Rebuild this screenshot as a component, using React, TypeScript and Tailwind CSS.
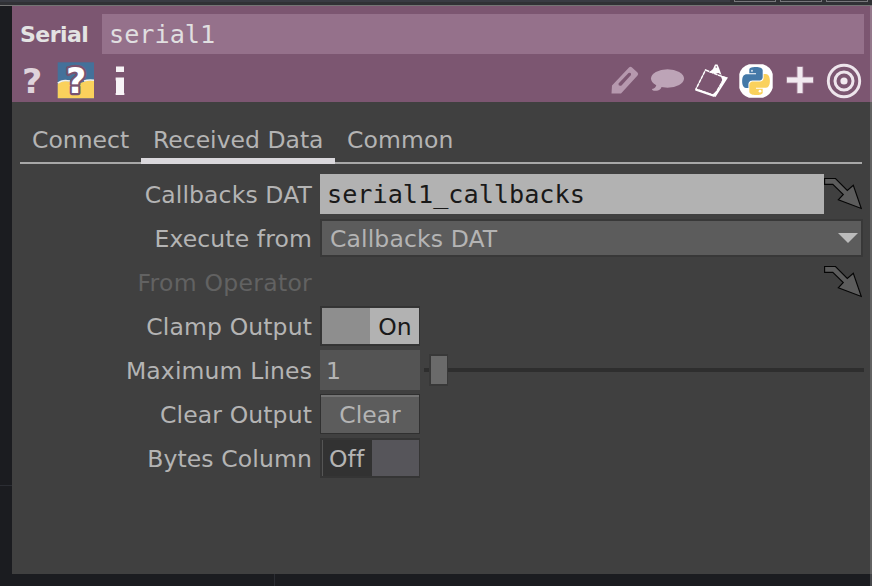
import React from "react";

const SANS = "font-['DejaVu_Sans',sans-serif]";
const MONO = "font-['DejaVu_Sans_Mono',monospace]";

function Row({ label, dim, children }: { label: string; dim?: boolean; children?: React.ReactNode }) {
  return (
    <div className="flex h-[44px] items-start">
      <div className={`w-[300px] shrink-0 text-right leading-[43px] ${dim ? "tracking-[0.28px] text-[#626262]" : "tracking-[0.12px] text-[#b4b4b4]"}`}>
        {label}
      </div>
      <div className="ml-2 flex h-10 flex-1 items-center">{children}</div>
    </div>
  );
}

function PickArrow() {
  return (
    <svg className="block h-10 w-[38px] shrink-0" viewBox="0 0 38 40" fill="#5c5c5c" stroke="#050505" strokeWidth="1.1">
      <path d="M.6 4.500H11.500L23.300 16.500L29.300 11.300L37.300 34.500L14.300 25.800L19.300 20.500L8.800 10.400H.6Z" />
    </svg>
  );
}

function PythonLogo() {
  return (
    <svg className="block size-[34px]" viewBox="0 0 34 34">
      <path d="M10 .3H24Q31.500 2.500 33.700 10V24Q31.500 31.500 24 33.700H10Q2.500 31.500 .3 24V10Q2.500 2.500 10 .3Z" fill="#fff" />
      <g transform="translate(3.200 3) scale(1.150 1.170)">
        <path
          fill="#4479a8"
          d="M14.25.18l.9.2.73.26.59.3.45.32.34.34.25.34.16.33.1.3.04.26.02.2-.01.13V8.5l-.05.63-.13.55-.21.46-.26.38-.3.31-.33.25-.35.19-.35.14-.33.1-.3.07-.26.04-.21.02H8.77l-.69.05-.59.14-.5.22-.41.27-.33.32-.27.35-.2.36-.15.37-.1.35-.07.32-.04.27-.02.21v3.06H3.17l-.21-.03-.28-.07-.32-.12-.35-.18-.36-.26-.36-.36-.35-.46-.32-.59-.28-.73-.21-.88-.14-1.05-.05-1.23.06-1.22.16-1.04.24-.87.32-.71.36-.57.4-.44.42-.33.42-.24.4-.16.36-.1.32-.05.24-.01h.16l.06.01h8.16v-.83H6.18l-.01-2.75-.02-.37.05-.34.11-.31.17-.28.25-.26.31-.23.38-.2.44-.18.51-.15.58-.12.64-.1.71-.06.77-.04.84-.02 1.27.05z"
        />
        <path
          fill="#fad15c"
          d="M21.04 6.11l.28.06.32.12.35.18.36.27.36.35.35.47.32.59.28.73.21.88.14 1.04.05 1.23-.06 1.23-.16 1.04-.24.86-.32.71-.36.57-.4.45-.42.33-.42.24-.4.16-.36.09-.32.05-.24.02-.16-.01h-8.22v.82h5.84l.01 2.76.02.36-.05.34-.11.31-.17.29-.25.25-.31.24-.38.2-.44.17-.51.15-.58.13-.64.09-.71.07-.77.04-.84.01-1.27-.04-1.07-.14-.9-.2-.73-.25-.59-.3-.45-.33-.34-.34-.25-.34-.16-.33-.1-.3-.04-.25-.02-.2.01-.13v-5.34l.05-.64.13-.54.21-.46.26-.38.3-.32.33-.24.35-.2.35-.14.33-.1.3-.06.26-.04.21-.02.13-.01h5.84l.69-.05.59-.14.5-.21.41-.28.33-.32.27-.35.2-.36.15-.36.1-.35.07-.32.04-.28.02-.21V6.07h2.09l.14.01z"
        />
        <circle cx="8.500" cy="3.300" r=".9" fill="#c9d9e6" />
        <circle cx="15.500" cy="20.700" r="1.200" fill="#fff" />
      </g>
    </svg>
  );
}

function HeaderIcons() {
  return (
    <div className="flex h-10 items-center pr-2 pl-2">
      <div className="w-[37px] pl-0.5 text-[34px] leading-[40px] font-bold text-[#dfd3db]">
        <span className="inline-block origin-left scale-x-[1.03]">?</span>
      </div>
      <svg className="mb-[2px] block h-[37px] w-[37px] shrink-0 overflow-visible" viewBox="0 0 37 37">
        <rect x=".7" y=".3" width="36.300" height="36" fill="#44719a" />
        <path d="M.7 22C5 18 11 18.500 17 21S28 17 37 18.500V36.300H.7Z" fill="#fad15c" />
        <path d="M.7 21.200C4.500 17.800 9 18 13 19M27 19Q31 17.500 37 18.200" fill="none" stroke="#f3f1ec" strokeWidth="1.500" />
        <text x="9" y="31" fontSize="35" fontWeight="700" fontFamily="DejaVu Sans, sans-serif" fill="#fff" stroke="#785370" strokeWidth="4.500" strokeLinejoin="round" paintOrder="stroke">?</text>
      </svg>
      <svg className="ml-5 block h-[30px] w-3 shrink-0" viewBox="0 0 12 30">
        <path d="M2 .5h8v5.500H2ZM2 11.500h8V29H2Z" fill="#f7f3f6" />
        <path d="M1 11.500h1v3H1ZM1 27h1v2H1ZM10 27h1v2h-1Z" fill="#a98ca1" />
      </svg>
      <div className="flex-1" />
      <svg className="block h-9 w-8 shrink-0" viewBox="0 0 32 36">
        <path d="M3 22.500L20 4.500Q21.500 3 23 4.500L28.500 9.500Q30 11 28.500 12.500L12 30.500H2.500Z" fill="#b698ae" />
        <path d="M9.500 20.500L19.500 10Q22.500 9 22 12L12.500 22.500Q9 23.500 9.500 20.500Z" fill="#7c5671" />
      </svg>
      <svg className="ml-[9px] block h-9 w-9 shrink-0" viewBox="0 0 36 36" fill="#bda4b7">
        <ellipse cx="17.500" cy="15.500" rx="16.500" ry="9.200" />
        <path d="M6.500 21Q6 25.500 2 26Q2 28.500 8 27.500Q11.500 26 11.500 23.500Z" />
      </svg>
      <svg className="ml-[7px] block h-9 w-9 shrink-0" viewBox="0 0 36 36">
        <path d="M12.500 7L31.500 14.500L21.500 32.500L3 26Z" fill="none" stroke="#fff" strokeWidth="1.500" strokeDasharray="4 .5" />
        <path d="M16 9.500L20 6L22 1.500H24.500L26 5L28.500 12L25.500 10L21 10.500ZM27.500 12.500L35 14.500L22.500 34L19.500 31.500L26 25.500L29.500 17.500Z" fill="#fff" />
        <circle cx="23.300" cy="4" r=".8" fill="#7c5671" />
        <path d="M2.500 26.500L21.500 33" stroke="#fff" strokeWidth="2" />
      </svg>
      <div className="ml-2.5"><PythonLogo /></div>
      <svg className="mr-3 mb-0.5 ml-[13px] block h-7 w-7 shrink-0" viewBox="0 0 28 28">
        <path d="M14 .5V27.500M.5 14H27.500" stroke="#b295aa" strokeWidth="6.500" />
        <path d="M14 1V27M1 14H27" stroke="#f1eaf0" strokeWidth="4.800" />
      </svg>
      <svg className="block h-9 w-9 shrink-0" viewBox="0 0 36 36" fill="none" stroke="#eee5ec">
        <circle cx="18" cy="18" r="15.700" strokeWidth="2.900" />
        <circle cx="18" cy="18" r="9" strokeWidth="3" />
        <circle cx="18" cy="18" r="3.600" fill="#f1e9ef" stroke="none" />
      </svg>
    </div>
  );
}

export default function App() {
  return (
    <div className={`flex h-[586px] w-[872px] flex-col overflow-hidden bg-[#1b1c20] text-[23.5px] ${SANS}`}>
      <div className="flex h-[6px] shrink-0 items-start justify-end gap-1 border-b border-[#747474] bg-[#303135] pr-1">
        <div className="h-0.5 flex-1 bg-[#393b43]" />
        <div className="h-0.5 w-[42px] border border-t-0 border-[#77777b]" />
        <div className="h-0.5 w-[42px] border border-t-0 border-[#77777b]" />
        <div className="h-0.5 w-[42px] border border-t-0 border-[#77777b]" />
      </div>
      <div className="flex h-[568px] shrink-0">
        <div className="h-[480px] w-3 shrink-0 border-b border-[#2b2d33]" />
        <div className="flex w-[858px] flex-col bg-[#404040]">
          <header className="h-24 shrink-0 bg-[#7c5671] pt-2">
            <div className="flex h-10 items-center pr-[6px]">
              <div className="w-[90px] shrink-0 pl-2 text-[22px] font-bold tracking-[-0.55px] text-[#e3e3e3]">Serial</div>
              <div className={`h-10 flex-1 bg-[#95718b] pl-[7px] text-[25.2px] leading-[41px] text-[#e0dfe0] ${MONO}`}>serial1</div>
            </div>
            <div className="mt-[7px]"><HeaderIcons /></div>
          </header>
          <nav className="mx-2 mt-[18px] flex h-11 shrink-0 text-[#b4b4b4]">
            <div className="w-[121px] border-b-2 border-[#a8a8a8] pl-3 leading-[40px]">Connect</div>
            <div className="w-[194px] border-b-[6px] border-[#dad8dc] pl-3 leading-[40px] whitespace-nowrap">Received Data</div>
            <div className="flex-1 border-b-2 border-[#a8a8a8] pl-3 leading-[40px] tracking-[0.1px]">Common</div>
          </nav>
          <main className="mt-[10px]">
            <Row label="Callbacks DAT">
              <div className={`h-10 w-[504px] bg-[#b2b2b2] pl-[7px] text-[25.2px] leading-[42px] text-[#191919] ${MONO}`}>serial1_callbacks</div>
              <PickArrow />
            </Row>
            <Row label="Execute from">
              <div className="flex h-[38px] w-[543px] items-center justify-between border-2 border-[#383838] bg-[#5c5c5c] pr-[3px] pl-2 text-[#b4b4b4]">
                <span className="pt-[3px] tracking-[0.12px]">Callbacks DAT</span>
                <svg className="block h-[10px] w-5" viewBox="0 0 20 10"><path d="M0 0H20L10 10Z" fill="#bcbcbc" /></svg>
              </div>
            </Row>
            <Row label="From Operator" dim>
              <div className="w-[504px]" />
              <PickArrow />
            </Row>
            <Row label="Clamp Output">
              <div className="flex h-10 w-[100px] items-center border border-[#333] bg-[#353535] p-px pr-0">
                <div className="h-9 w-12 bg-[#8e8e8e]" />
                <div className="h-9 flex-1 bg-[#b2b2b2] pl-[1px] text-center leading-[39px] text-[#191919]">On</div>
              </div>
            </Row>
            <Row label="Maximum Lines">
              <div className="h-10 w-[100px] bg-[#545454] pl-[6px] leading-[43px] text-[#b4b4b4]">1</div>
              <div className="ml-1 flex h-10 flex-1 items-center pr-[6px]">
                <div className="h-1 w-[5px] bg-[#2e2e2e]" />
                <div className="h-8 w-[19px] border-2 border-r border-[#383838] bg-[#6a6a6a]" />
                <div className="h-1 flex-1 bg-[#2e2e2e]" />
              </div>
            </Row>
            <Row label="Clear Output">
              <div className="h-10 w-[100px] border border-[#303030] bg-[#5c5c5c]">
                <div className="h-[38px] border-t-2 border-[#747474] text-center leading-[37px] text-[#b4b4b4]">Clear</div>
              </div>
            </Row>
            <Row label="Bytes Column">
              <div className="flex h-10 w-[100px] border-2 border-r border-[#353535] bg-[#56555a]">
                <div className="w-[50px] border-l border-[#555] bg-[#323232] pl-[6px] leading-[39px] tracking-[0.1px] text-[#b4b4b4]">Off</div>
              </div>
            </Row>
          </main>
        </div>
        <div className="flex w-0.5 flex-col bg-[#626262]"><div className="h-24 bg-[#94788b]" /></div>
      </div>
      <div className="flex flex-1">
        <div className="w-[275px] border-r border-[#2b2d33]" />
        <div className="flex-1" />
        <div className="w-0.5 bg-[#46474a]" />
      </div>
    </div>
  );
}
